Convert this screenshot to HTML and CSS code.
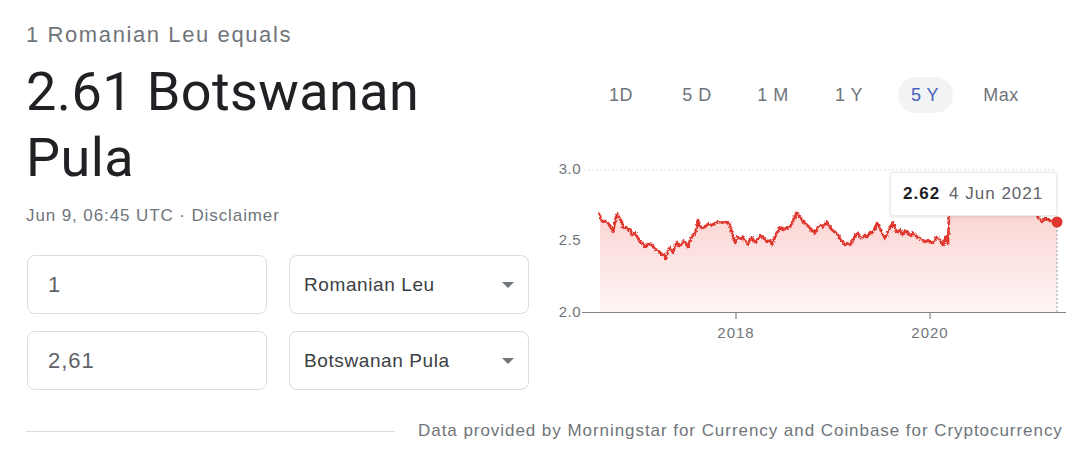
FILE: index.html
```html
<!DOCTYPE html>
<html lang="en">
<head>
<meta charset="utf-8">
<title>Romanian Leu to Botswanan Pula</title>
<link rel="stylesheet" href="styles.css">
</head>
<body>
<div class="top">
  <div class="left">
    <div class="sub">1 Romanian Leu equals</div>
    <div class="value">2.61 Botswanan<br>Pula</div>
    <div class="meta">Jun 9, 06:45 UTC · Disclaimer</div>
    <div class="rows">
      <div class="row">
        <div class="field amount">1</div>
        <div class="field select">Romanian Leu<span class="caret"></span></div>
      </div>
      <div class="row">
        <div class="field amount">2,61</div>
        <div class="field select">Botswanan Pula<span class="caret"></span></div>
      </div>
    </div>
  </div>
  <div class="right">
    <div class="tabs">
      <div class="tab"><span>1D</span></div>
      <div class="tab"><span>5 D</span></div>
      <div class="tab"><span>1 M</span></div>
      <div class="tab"><span>1 Y</span></div>
      <div class="tab active"><span>5 Y</span></div>
      <div class="tab"><span>Max</span></div>
    </div>
    <div class="chart">
      <svg class="plot" width="540" height="200" viewBox="540 150 540 200" xmlns="http://www.w3.org/2000/svg">
        <defs>
          <linearGradient id="fillg" x1="0" y1="0" x2="0" y2="1">
            <stop offset="0" stop-color="#e8453c" stop-opacity="0.24"/>
            <stop offset="1" stop-color="#e8453c" stop-opacity="0.05"/>
          </linearGradient>
          <filter id="rough" x="-5%" y="-20%" width="110%" height="140%">
            <feTurbulence type="fractalNoise" baseFrequency="0.45" numOctaves="2" seed="3" result="n"/>
            <feDisplacementMap in="SourceGraphic" in2="n" scale="3.5" xChannelSelector="R" yChannelSelector="G"/>
          </filter>
        </defs>
        <line x1="584" y1="170" x2="1056" y2="170" stroke="#e3e3e3" stroke-width="1" stroke-dasharray="2 2"/>
        <path fill="url(#fillg)" d="M600 215 L602 222 L608 223 L613 232 L617 214 L622 222 L623 228 L628 230 L632 235 L635 233 L640 242 L645 247 L652 245 L657 250 L662 255 L666 259 L670 247 L673 253 L677 242 L681 245 L684 240 L688 247 L692 237 L695 233 L698 220 L702 228 L705 227 L712 225 L715 223 L718 221 L725 222 L730 225 L735 243 L738 237 L743 237 L748 245 L752 238 L757 240 L763 237 L767 242 L772 245 L777 232 L780 227 L783 230 L790 227 L797 212 L802 220 L810 228 L815 233 L820 225 L823 227 L827 222 L832 230 L838 235 L845 245 L850 245 L857 233 L862 238 L867 237 L872 233 L877 223 L882 233 L885 238 L888 232 L893 222 L897 232 L902 235 L907 232 L913 233 L918 237 L925 242 L930 242 L933 243 L937 237 L940 240 L943 245 L946 236 L948 244 L949 214 L960 205 L1000 205 L1035 212 L1038 217 L1042 222 L1047 219 L1057 222 L1057 312 L600 312 Z"/>
        <path fill="none" stroke="#e0382e" stroke-width="2.6" stroke-linejoin="round" filter="url(#rough)" d="M599 213 L602 222 L605 221 L608 223 L611 228 L613 232 L615 222 L617 214 L620 219 L622 222 L623 228 L626 227 L628 230 L630 229 L632 235 L635 233 L638 238 L640 242 L643 244 L645 247 L648 244 L652 245 L655 249 L657 250 L660 252 L662 255 L664 254 L666 259 L668 251 L670 247 L673 253 L675 246 L677 242 L679 246 L681 245 L684 240 L686 244 L688 247 L690 240 L692 237 L695 233 L697 227 L698 220 L700 226 L702 228 L705 227 L708 224 L712 225 L715 223 L718 221 L721 223 L725 222 L728 222 L730 225 L733 236 L735 243 L738 237 L741 239 L743 237 L746 242 L748 245 L750 239 L752 238 L755 242 L757 240 L760 236 L763 237 L765 240 L767 242 L770 240 L772 245 L775 237 L777 232 L780 227 L783 230 L786 228 L790 227 L793 221 L797 212 L799 216 L802 220 L806 224 L810 228 L813 231 L815 233 L818 227 L820 225 L823 227 L825 224 L827 222 L830 227 L832 230 L835 232 L838 235 L841 240 L845 245 L848 243 L850 245 L853 240 L857 233 L860 236 L862 238 L865 235 L867 237 L870 232 L872 233 L875 229 L877 223 L880 229 L882 233 L885 238 L888 232 L891 226 L893 222 L895 228 L897 232 L900 230 L902 235 L905 231 L907 232 L910 236 L913 233 L916 236 L918 237 L921 239 L925 242 L928 240 L930 242 L933 243 L935 239 L937 237 L940 240 L943 245 L946 236 L948 244 L949 214 L960 205 L1000 205 L1035 212 L1038 217 L1042 222 L1045 218 L1047 219 L1051 221 L1057 222"/>
        <line x1="1057" y1="222" x2="1057" y2="312" stroke="#9aa0a6" stroke-width="1" stroke-dasharray="2 2"/>
        <circle cx="1057" cy="222" r="5.5" fill="#e0382e"/>
        <line x1="582" y1="312.5" x2="1066" y2="312.5" stroke="#80868b" stroke-width="1.2"/>
        <line x1="736" y1="312" x2="736" y2="319" stroke="#80868b" stroke-width="1.2"/>
        <line x1="930" y1="312" x2="930" y2="319" stroke="#80868b" stroke-width="1.2"/>
        <g class="axis">
          <text x="581" y="174" text-anchor="end">3.0</text>
          <text x="581" y="245" text-anchor="end">2.5</text>
          <text x="581" y="317" text-anchor="end">2.0</text>
          <text class="year" x="736" y="338" text-anchor="middle">2018</text>
          <text class="year" x="930" y="338" text-anchor="middle">2020</text>
        </g>
      </svg>
      <div class="tooltip"><b>2.62</b><span>4 Jun 2021</span></div>
    </div>
  </div>
</div>
<div class="footer">
  <div class="rule"></div>
  <div class="source">Data provided by Morningstar for Currency and Coinbase for Cryptocurrency</div>
</div>
</body>
</html>
```

FILE: styles.css
```css
html, body {
  margin: 0;
  padding: 0;
  background: #ffffff;
}
body {
  width: 1080px;
  height: 472px;
  overflow: hidden;
  font-family: "Liberation Sans", Arial, sans-serif;
  color: #202124;
}
.top {
  display: flex;
  height: 391px;
}
.left {
  width: 540px;
  padding: 22px 0 0 26px;
  box-sizing: border-box;
}
.sub {
  font-size: 22px;
  line-height: 26px;
  letter-spacing: 1.6px;
  color: #70757a;
}
.value {
  margin-top: 11px;
  font-family: Roboto, "Liberation Sans", sans-serif;
  font-size: 54px;
  line-height: 66px;
  letter-spacing: 0.4px;
  color: #202124;
}
.meta {
  margin-top: 15px;
  font-size: 17px;
  line-height: 20px;
  letter-spacing: 0.9px;
  color: #70757a;
}
.rows {
  margin-top: 29px;
  display: flex;
  flex-direction: column;
  gap: 17px;
}
.row {
  display: flex;
  gap: 22px;
  margin-left: 1px;
}
.field {
  width: 240px;
  height: 59px;
  box-sizing: border-box;
  border: 1px solid #dadce0;
  border-radius: 8px;
  display: flex;
  align-items: center;
}
.amount {
  padding-left: 20px;
  font-size: 22px;
  letter-spacing: 1px;
  color: #5f6368;
}
.select {
  position: relative;
  padding-left: 14px;
  font-size: 19px;
  letter-spacing: 0.6px;
  color: #3c4043;
}
.caret {
  position: absolute;
  right: 14px;
  top: 26px;
  width: 0;
  height: 0;
  border-left: 6px solid transparent;
  border-right: 6px solid transparent;
  border-top: 6px solid #70757a;
}
.right {
  width: 540px;
  padding-top: 77px;
  box-sizing: border-box;
}
.tabs {
  display: flex;
  padding-left: 43px;
}
.tab {
  width: 76px;
  display: flex;
  justify-content: center;
}
.tab span {
  display: flex;
  align-items: center;
  justify-content: center;
  width: 55px;
  height: 36px;
  border-radius: 18px;
  font-size: 18px;
  letter-spacing: 0.5px;
  color: #70757a;
}
.tab.active span {
  background: #f1f3f4;
  color: #4a5fc1;
}
.chart {
  position: relative;
  margin-top: 37px;
  width: 540px;
  height: 200px;
}
.plot {
  display: block;
}
.axis text {
  font-family: "Liberation Sans", Arial, sans-serif;
  font-size: 15px;
  letter-spacing: 0.5px;
  fill: #70757a;
}
.axis .year {
  letter-spacing: 1px;
}
.tooltip {
  position: absolute;
  left: 350px;
  top: 22px;
  width: 167px;
  height: 44px;
  box-sizing: border-box;
  background: #ffffff;
  border: 1px solid #e8eaed;
  border-radius: 3px;
  box-shadow: 0 1px 3px rgba(60, 64, 67, 0.15);
  display: flex;
  align-items: center;
  padding-left: 12px;
  font-size: 17px;
  letter-spacing: 1px;
  color: #5f6368;
}
.tooltip b {
  color: #202124;
  font-weight: bold;
  margin-right: 9px;
}
.footer {
  display: flex;
  align-items: center;
  margin-top: 30px;
  padding-left: 26px;
  height: 20px;
}
.rule {
  width: 369px;
  height: 1px;
  background: #dadce0;
}
.source {
  margin-left: 23px;
  font-size: 17px;
  line-height: 20px;
  letter-spacing: 0.95px;
  color: #70757a;
}
```
